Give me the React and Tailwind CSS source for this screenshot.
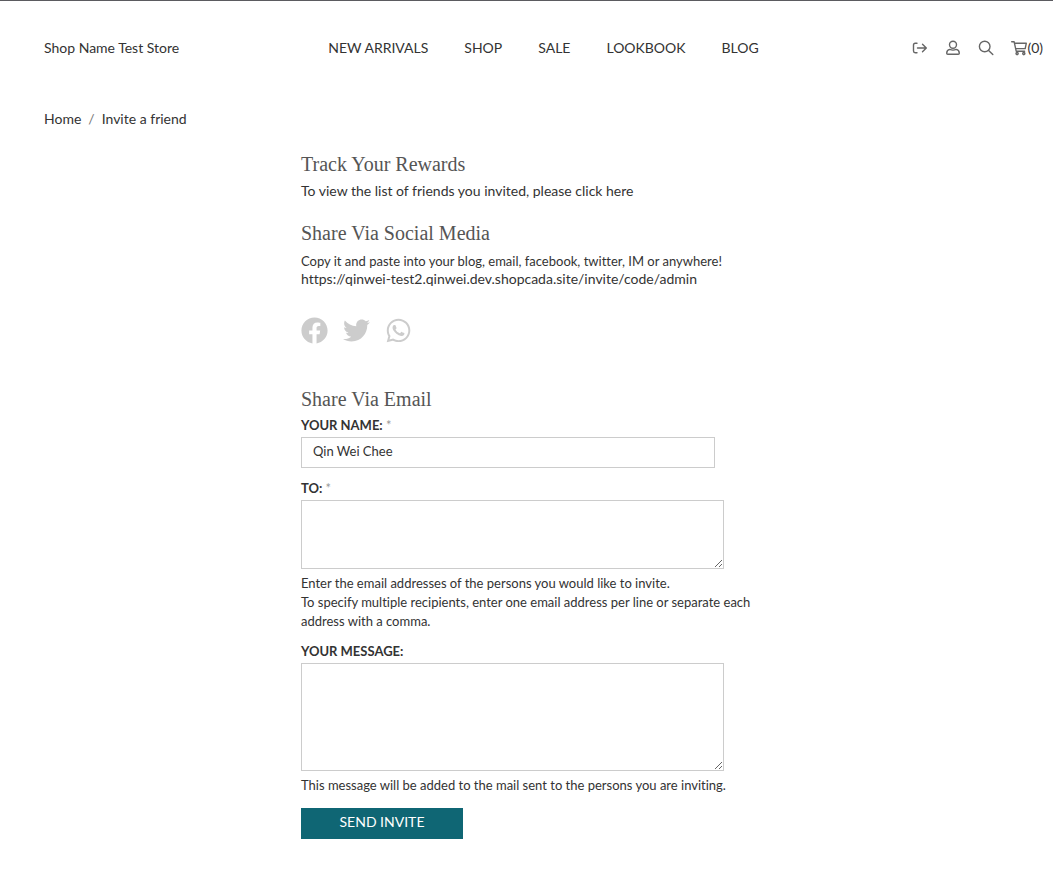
import { FaFacebook, FaTwitter, FaWhatsapp } from "react-icons/fa";

const links = ["New Arrivals", "Shop", "Sale", "Lookbook", "Blog"];

function Icon({ children }) {
  return (
    <svg viewBox="0 0 16 16" className="size-4" fill="none" stroke="currentColor" strokeWidth="1.4" strokeLinecap="round" strokeLinejoin="round" aria-hidden="true">
      {children}
    </svg>
  );
}

function Header() {
  return (
    <header className="grid grid-cols-[1fr_auto_1fr] items-center border-t border-[#5b5b60] pt-[35px] pr-2.5 pb-9 pl-11 leading-6">
      <a href="#home">Shop Name Test Store</a>
      <nav className="flex gap-9 uppercase">
        {links.map((label) => (
          <a key={label} href="#shop">{label}</a>
        ))}
      </nav>
      <div className="flex items-center justify-end gap-[17px] text-[#666]">
        <a href="#logout" aria-label="Log out">
          <Icon>
            <path d="M5 3.2H3.2Q1.5 3.2 1.5 4.9V11.1Q1.5 12.8 3.2 12.8H5M5.5 8H14.2M10.5 4.2L14.3 8L10.5 11.8" />
          </Icon>
        </a>
        <a href="#account" aria-label="Account">
          <Icon>
            <circle cx="8" cy="4.7" r="3.5" />
            <path d="M4.8 9.4C2.8 9.9 1.7 11.2 1.7 13.2Q1.7 14.3 2.8 14.3H13.2Q14.3 14.3 14.3 13.2C14.3 11.2 13.2 9.9 11.2 9.4Q8 10.8 4.8 9.4Z" />
          </Icon>
        </a>
        <a href="#search" aria-label="Search">
          <Icon>
            <circle cx="6.7" cy="6.5" r="5.3" />
            <path d="M10.6 10.4L14.8 14.6" />
          </Icon>
        </a>
        <a href="#cart" className="flex items-center">
          <Icon>
            <path d="M.7 1.7H3.1L5.2 11.2H13.6M3.4 3.2H15.3L14.2 8.6H4.7" />
            <circle cx="6.1" cy="13.6" r="1.1" />
            <circle cx="12.8" cy="13.6" r="1.1" />
          </Icon>
          <span className="text-[#333]">(0)</span>
        </a>
      </div>
    </header>
  );
}

function Heading({ children }) {
  return <h2 className="font-['Liberation_Serif',serif] text-xl leading-[30px] text-[#555]">{children}</h2>;
}

function Label({ htmlFor, required, children }) {
  return (
    <label htmlFor={htmlFor} className="block text-[13px] leading-[23px] font-bold uppercase">
      {children} {required && <span className="font-normal text-[#999]">*</span>}
    </label>
  );
}

function Help({ children }) {
  return <p className="pt-[5px] text-[13px] leading-[19px]">{children}</p>;
}

export default function App() {
  return (
    <div className="bg-white font-[Lato,sans-serif] text-sm text-[#333] [font-variant-ligatures:none]">
      <Header />
      <nav aria-label="Breadcrumb" className="flex gap-[7px] pt-[13px] pl-11 leading-5">
        <a href="#home">Home</a>
        <span className="text-[#777]">/</span>
        <a href="#invite">Invite a friend</a>
      </nav>
      <main className="mx-auto w-full max-w-[451px] pt-5 pb-10">
        <section>
          <Heading>Track Your Rewards</Heading>
          <p className="leading-6">
            To view the list of friends you invited, please <a href="#rewards">click here</a>
          </p>
        </section>
        <section className="mt-[15px]">
          <Heading>Share Via Social Media</Heading>
          <p className="pt-1 text-[13px] leading-[18px]">
            Copy it and paste into your blog, email, facebook, twitter, IM or anywhere!
          </p>
          <p className="leading-[18px]">https://qinwei-test2.qinwei.dev.shopcada.site/invite/code/admin</p>
          <div className="mt-[29px] flex items-center gap-[15px] text-[#ccc]">
            <a href="#facebook" aria-label="Facebook"><FaFacebook size={27} /></a>
            <a href="#twitter" aria-label="Twitter"><FaTwitter size={27} /></a>
            <a href="#whatsapp" aria-label="WhatsApp"><FaWhatsapp size={27} /></a>
          </div>
        </section>
        <form className="mt-10" onSubmit={(e) => e.preventDefault()}>
          <Heading>Share Via Email</Heading>
          <div>
            <Label htmlFor="name" required>Your name:</Label>
            <input id="name" defaultValue="Qin Wei Chee" className="block h-[31px] w-full max-w-[414px] border border-[#ccc] px-[11px] pb-1 text-[13px] outline-none" />
          </div>
          <div className="mt-[9px]">
            <Label htmlFor="to" required>To:</Label>
            <textarea id="to" className="block h-[69px] w-full max-w-[423px] border border-[#ccc] px-[11px] py-1 text-[13px] outline-none" />
            <Help>
              Enter the email addresses of the persons you would like to invite.
              <br />
              To specify multiple recipients, enter one email address per line or separate each address with a comma.
            </Help>
          </div>
          <div className="mt-[9px]">
            <Label htmlFor="message">Your message:</Label>
            <textarea id="message" className="block h-[108px] w-full max-w-[423px] border border-[#ccc] px-[11px] py-1 text-[13px] outline-none" />
            <Help>This message will be added to the mail sent to the persons you are inviting.</Help>
          </div>
          <button type="submit" className="mt-[13px] h-[31px] w-[162px] bg-[#0f6674] pb-1 uppercase text-white">Send invite</button>
        </form>
      </main>
    </div>
  );
}
